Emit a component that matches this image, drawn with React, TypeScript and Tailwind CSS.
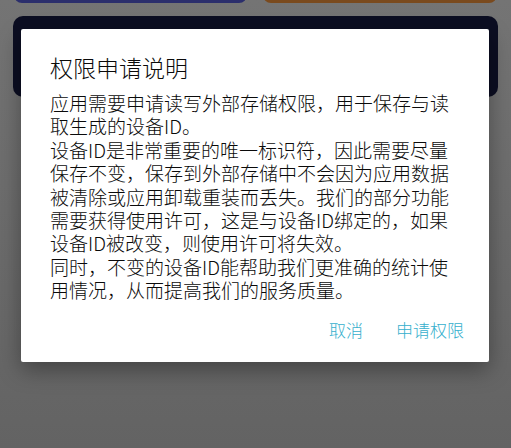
import React from "react";

const lines = [
  "应用需要申请读写外部存储权限，用于保存与读",
  "取生成的设备ID。",
  "设备ID是非常重要的唯一标识符，因此需要尽量",
  "保存不变，保存到外部存储中不会因为应用数据",
  "被清除或应用卸载重装而丢失。我们的部分功能",
  "需要获得使用许可，这是与设备ID绑定的，如果",
  "设备ID被改变，则使用许可将失效。",
  "同时，不变的设备ID能帮助我们更准确的统计使",
  "用情况，从而提高我们的服务质量。",
];

export default function App() {
  return (
    <div
      className="relative w-[511px] h-[448px] overflow-hidden bg-gradient-to-b from-[#747474] to-[#636363]"
      style={{ fontFamily: '"Noto Sans CJK SC", "Noto Sans", sans-serif' }}
    >
      <div className="flex flex-col px-[13px]">
        <div className="flex gap-[16px] mt-[-20px] pl-[1px]">
          <div className="w-[233px] h-[23px] rounded-[8px] bg-[#2b2e6c]" />
          <div className="w-[234px] h-[23px] rounded-[8px] bg-[#7a4a1e]" />
        </div>
        <div className="mt-[13px] w-[485px] h-[81px] rounded-[10px] bg-[#0c0e22]" />
      </div>

      <div className="absolute left-[21px] top-[29px] w-[468px] h-[333px] bg-white rounded-[2px] shadow-[0_8px_22px_rgba(0,0,0,0.35)] flex flex-col pl-[29px] pt-[22px] font-light">
        <div className="text-[23px] leading-[32px] text-[#0a0a0a]">权限申请说明</div>
        <div className="mt-[8px] text-[19px] leading-[23.4px] text-[#0a0a0a]">
          {lines.map((l, i) => (
            <div key={i} className="whitespace-nowrap">
              {l}
            </div>
          ))}
        </div>
        <div className="mt-[16px] flex justify-end gap-[33px] pr-[25px] text-[17px] leading-[24px] text-[#36afcd]">
          <span>取消</span>
          <span>申请权限</span>
        </div>
      </div>
    </div>
  );
}
